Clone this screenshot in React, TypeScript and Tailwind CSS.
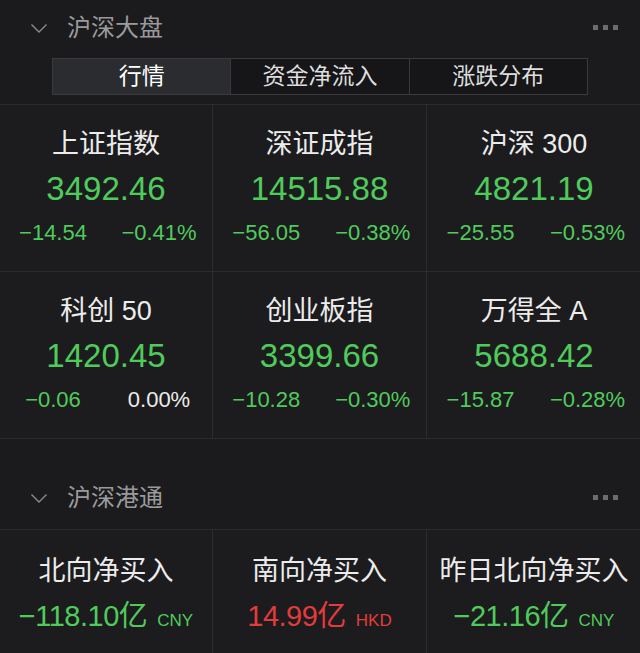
import React from "react";

const FONT = { fontFamily: '"Liberation Sans", "Noto Sans CJK SC", sans-serif' };

type Quote = { name: string; value: string; chg: string; pct: string; flat?: boolean };

const quotes: Quote[] = [
  { name: "上证指数", value: "3492.46", chg: "−14.54", pct: "−0.41%" },
  { name: "深证成指", value: "14515.88", chg: "−56.05", pct: "−0.38%" },
  { name: "沪深 300", value: "4821.19", chg: "−25.55", pct: "−0.53%" },
  { name: "科创 50", value: "1420.45", chg: "−0.06", pct: "0.00%", flat: true },
  { name: "创业板指", value: "3399.66", chg: "−10.28", pct: "−0.30%" },
  { name: "万得全 A", value: "5688.42", chg: "−15.87", pct: "−0.28%" },
];

const flows = [
  { name: "北向净买入", value: "−118.10亿", unit: "CNY", up: false },
  { name: "南向净买入", value: "14.99亿", unit: "HKD", up: true },
  { name: "昨日北向净买入", value: "−21.16亿", unit: "CNY", up: false },
];

function SectionHeader({ title }: { title: string }) {
  return (
    <div className="flex h-[56px] items-center justify-between pl-[30px] pr-[22px]">
      <div className="flex items-center">
        <svg width="18" height="12" viewBox="0 0 18 12" fill="none" className="mr-[19px]">
          <path d="M1.5 2.5 L9 10 L16.5 2.5" stroke="#8a8a8c" strokeWidth="1.4" />
        </svg>
        <span className="text-[24px] leading-none text-[#9a9a9c]">{title}</span>
      </div>
      <div className="mb-[2px] flex gap-[5px]">
        <span className="h-[5px] w-[5px] bg-[#6c6c6e]" />
        <span className="h-[5px] w-[5px] bg-[#6c6c6e]" />
        <span className="h-[5px] w-[5px] bg-[#6c6c6e]" />
      </div>
    </div>
  );
}

function QuoteCell({ q }: { q: Quote }) {
  return (
    <div className="flex h-[166px] flex-col items-center bg-[#1c1c1e] pt-[22px]">
      <div className="h-[34px] text-[27px] leading-[34px] text-[#ececec]">{q.name}</div>
      <div className="mt-[10px] h-[36px] text-[33px] leading-[36px] text-[#4fcb5c]">{q.value}</div>
      <div className="mt-[12px] grid w-full grid-cols-2 text-center text-[22px] leading-[28px]">
        <span className="text-[#4fcb5c]">{q.chg}</span>
        <span className={q.flat ? "text-[#ececec]" : "text-[#4fcb5c]"}>{q.pct}</span>
      </div>
    </div>
  );
}

export default function App() {
  return (
    <div style={FONT} className="h-[653px] w-[640px] overflow-hidden bg-[#1b1b1d]">
      <SectionHeader title="沪深大盘" />
      <div className="ml-[52px] mt-[2px] flex h-[37px] w-[536px] border border-[#3a3a3c] bg-[#161618] text-[23px]">
        <div className="flex flex-1 items-center justify-center bg-[#2b2c2f] text-white">行情</div>
        <div className="flex flex-1 items-center justify-center border-l border-[#3a3a3c] text-[#dedede]">资金净流入</div>
        <div className="flex flex-1 items-center justify-center border-l border-[#3a3a3c] text-[#dedede]">涨跌分布</div>
      </div>
      <div className="mt-[9px] grid grid-cols-[212px_213px_214px] gap-px border-y border-[#2c2c2e] bg-[#2c2c2e]">
        {quotes.map((q) => (
          <QuoteCell key={q.name} q={q} />
        ))}
      </div>

      <div className="flex h-[90px] items-end pb-[3px]">
        <div className="w-full">
          <SectionHeader title="沪深港通" />
        </div>
      </div>
      <div className="grid grid-cols-[212px_213px_214px] gap-px border-t border-[#2c2c2e] bg-[#2c2c2e]">
        {flows.map((f) => (
          <div key={f.name} className="flex h-[140px] flex-col items-center bg-[#1c1c1e] pt-[24px]">
            <div className="h-[34px] text-[27px] leading-[34px] text-[#ececec]">{f.name}</div>
            <div className={"mt-[10px] flex items-baseline " + (f.up ? "text-[#e23b3b]" : "text-[#4fcb5c]")}>
              <span className="text-[29px] leading-[36px] tracking-[-0.5px]">{f.value}</span>
              <span className="ml-[10px] text-[17px]">{f.unit}</span>
            </div>
          </div>
        ))}
      </div>
    </div>
  );
}
